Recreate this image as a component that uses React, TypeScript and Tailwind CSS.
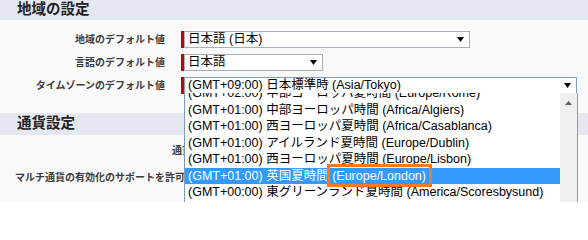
const FONT = { fontFamily: '"Liberation Sans", "Noto Sans CJK JP", sans-serif' };

const zones = [
  { tz: '(GMT+02:00) 中部ヨーロッパ夏時間', id: '(Europe/Rome)' },
  { tz: '(GMT+01:00) 中部ヨーロッパ時間', id: '(Africa/Algiers)' },
  { tz: '(GMT+01:00) 西ヨーロッパ夏時間', id: '(Africa/Casablanca)' },
  { tz: '(GMT+01:00) アイルランド夏時間', id: '(Europe/Dublin)' },
  { tz: '(GMT+01:00) 西ヨーロッパ夏時間', id: '(Europe/Lisbon)' },
  { tz: '(GMT+01:00) 英国夏時間', id: '(Europe/London)', selected: true },
  { tz: '(GMT+00:00) 東グリーンランド夏時間', id: '(America/Scoresbysund)' },
];

function Caret() {
  return (
    <svg width="7" height="5" viewBox="0 0 7 5" className="shrink-0">
      <path d="M0 0h7L3.5 5z" fill="#000" />
    </svg>
  );
}

function Select({ value, width, active }: { value: string; width: string; active?: boolean }) {
  return (
    <div
      className={`flex items-center h-[17px] bg-white border pl-[3px] pr-[5px] ${width} ${
        active ? 'border-[#7f9db9]' : 'border-[#a9b0b8]'
      }`}
    >
      <span className="flex-1 text-[12.5px] leading-none text-black whitespace-nowrap">{value}</span>
      <Caret />
    </div>
  );
}

function Row({ label, value, width, active }: { label: string; value: string; width: string; active?: boolean }) {
  return (
    <div className="flex items-center h-[17px]">
      <div className="w-[165px] text-right text-[10px] font-bold text-[#3c3c3c] whitespace-nowrap">{label}</div>
      <div className="ml-[16px] w-[3px] h-[17px] bg-[#c00]" />
      <Select value={value} width={width} active={active} />
    </div>
  );
}

function SectionHeader({ title }: { title: string }) {
  return (
    <div className="h-[22px] bg-[#e4e7ef] flex items-center pl-[17px]">
      <span className="text-[14.5px] font-bold text-[#222]">{title}</span>
    </div>
  );
}

export default function App() {
  return (
    <div className="relative w-[588px] h-[202px] overflow-hidden bg-[#f9f9f9]" style={FONT}>
      <div className="h-[20px] bg-[#e4e7ef] flex items-center pl-[17px]">
        <span className="text-[14.5px] font-bold text-[#222]">地域の設定</span>
      </div>

      <div className="flex flex-col gap-[6px] pt-[11px]">
        <Row label="地域のデフォルト値" value="日本語 (日本)" width="w-[286px]" />
        <Row label="言語のデフォルト値" value="日本語" width="w-[139px]" />
        <Row label="タイムゾーンのデフォルト値" value="(GMT+09:00) 日本標準時 (Asia/Tokyo)" width="w-[393px]" active />
      </div>

      <div className="mt-[19px]">
        <SectionHeader title="通貨設定" />
      </div>

      <div className="flex flex-col gap-[10px] pt-[7px]">
        <div className="flex items-center h-[17px]">
          <div className="pl-[172px] text-[10px] font-bold text-[#3c3c3c] whitespace-nowrap">通貨のロケール</div>
        </div>
        <div className="flex items-center h-[17px]">
          <div className="pl-[15px] text-[10px] font-bold text-[#3c3c3c] whitespace-nowrap">
            マルチ通貨の有効化のサポートを許可する
          </div>
        </div>
      </div>

      {/* open dropdown list */}
      <div className="absolute top-[93px] left-[184px] w-[394px] h-[112px] bg-white border-x border-[#7f9db9] overflow-hidden">
        <div className="mt-[-8px] pr-[17px]">
          {zones.map((z, i) => (
            <div
              key={i}
              className={`h-[16.5px] flex items-center pl-[3px] text-[12.5px] leading-none whitespace-nowrap ${
                z.selected ? 'bg-[#3399ff] text-white' : 'text-black'
              }`}
            >
              <span>{z.tz}</span>
              <span className="ml-[3.5px] relative">
                {z.id}
                {z.selected && (
                  <span className="absolute -left-[5px] -right-[6px] -top-[6px] -bottom-[5px] border-[3px] border-[#f47a1f]" />
                )}
              </span>
            </div>
          ))}
        </div>
        <div className="absolute top-0 right-0 bottom-0 w-[17px] bg-[#f0f0f0] flex justify-center pt-[8px]">
          <svg width="7" height="4" viewBox="0 0 7 4">
            <path d="M0 4h7L3.5 0z" fill="#606060" />
          </svg>
        </div>
      </div>
    </div>
  );
}
